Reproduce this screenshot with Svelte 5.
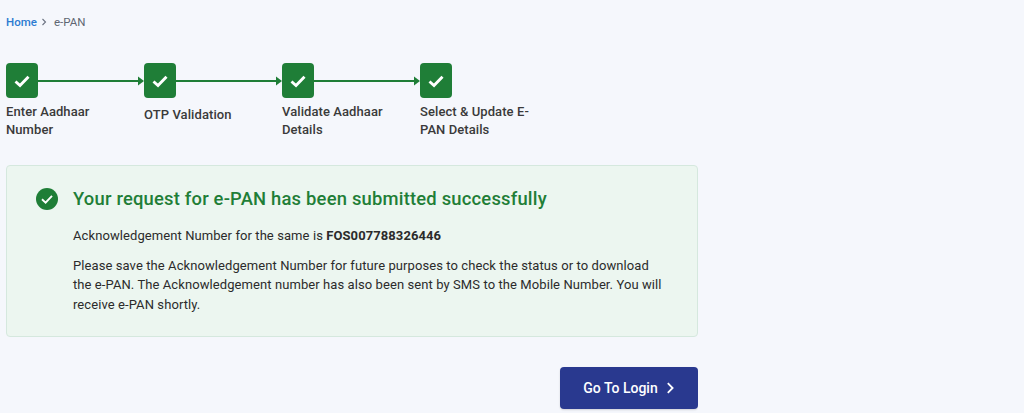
<script>
  const steps = [
    { label: 'Enter Aadhaar Number', arrow: true, cls: 'two' },
    { label: 'OTP Validation', arrow: true, cls: 'one' },
    { label: 'Validate Aadhaar Details', arrow: true, cls: 'two' },
    { label: 'Select & Update E-PAN Details', arrow: false, cls: 'two' }
  ];
</script>

<div class="page">
  <nav class="crumbs">
    <span class="home">Home</span>
    <svg class="sep" width="6" height="8" viewBox="0 0 6 8"><path d="M1.5 1 L4.5 4 L1.5 7" fill="none" stroke="#6b7280" stroke-width="1.1"/></svg>
    <span class="cur">e-PAN</span>
  </nav>

  <div class="stepper">
    {#each steps as s}
      <div class="step">
        <div class="track">
          <div class="box">
            <svg width="18" height="14" viewBox="0 0 18 14"><path d="M2.5 7.5 L7 11.5 L15.5 2.8" fill="none" stroke="#fff" stroke-width="2.9"/></svg>
          </div>
          {#if s.arrow}
            <svg class="arrow" width="106" height="10" viewBox="0 0 106 10"><path d="M0 5 H103" stroke="#1f7e37" stroke-width="2"/><path d="M100 0.5 L106 5 L100 9.5 Z" fill="#1f7e37"/></svg>
          {/if}
        </div>
        <div class="label {s.cls}">{s.label}</div>
      </div>
    {/each}
  </div>

  <section class="card">
    <div class="head">
      <svg width="22" height="22" viewBox="0 0 22 22"><circle cx="11" cy="11" r="11" fill="#1f7e37"/><path d="M6 11.3 L9.6 14.6 L16 7.8" fill="none" stroke="#fff" stroke-width="1.9"/></svg>
      <h2>Your request for e-PAN has been submitted successfully</h2>
    </div>
    <div class="body">
      <p class="ack">Acknowledgement Number for the same is <b>FOS007788326446</b></p>
      <p>Please save the Acknowledgement Number for future purposes to check the status or to download the e-PAN. The Acknowledgement number has also been sent by SMS to the Mobile Number. You will receive e-PAN shortly.</p>
    </div>
  </section>

  <div class="actions">
    <button>Go To Login
      <svg width="9" height="12" viewBox="0 0 9 12"><path d="M1.8 1.2 L6.6 6 L1.8 10.8" fill="none" stroke="#fff" stroke-width="1.8"/></svg>
    </button>
  </div>
</div>

<style>
  :global(body) { margin: 0; background: #f5f7fc; }
  .page { width: 692px; height: 398px; padding: 15px 0 0 6px; box-sizing: content-box; font-family: Roboto, "Liberation Sans", sans-serif; color: #2b2b2b; overflow: hidden; }
  .crumbs { display: flex; align-items: center; height: 14px; font-size: 11.5px; }
  .home { color: #2c7bd1; font-weight: 500; }
  .sep { margin: 0 7px 0 4px; }
  .cur { color: #5f6672; }
  .stepper { display: flex; margin-top: 34px; }
  .step { width: 138px; }
  .track { display: flex; align-items: center; }
  .box { width: 32px; height: 35px; flex: none; background: #1f7e37; border-radius: 4px; display: flex; align-items: center; justify-content: center; }
  .arrow { flex: none; }
  .label { width: 112px; font-size: 13px; font-weight: 500; line-height: 18px; color: #3a3a3a; letter-spacing: .08px; }
  .label.two { margin-top: 5px; }
  .label.one { margin-top: 8px; }
  .card { margin-top: 26px; width: 692px; height: 172px; box-sizing: border-box; border: 1px solid #d5e8de; border-radius: 4px; background: #ecf6f0; padding: 21px 30px 0 29px; }
  .head { display: flex; align-items: center; gap: 15px; }
  h2 { margin: 0; font-size: 18.4px; line-height: 24px; font-weight: 500; color: #1f7e37; letter-spacing: .2px; }
  .body { padding-left: 37px; font-size: 13px; line-height: 19.5px; color: #2b2b2b; letter-spacing: .085px; }
  p { margin: 0; }
  .ack { margin-top: 15px; margin-bottom: 10px; }
  b { font-weight: 700; }
  .actions { width: 692px; display: flex; justify-content: flex-end; margin-top: 30px; }
  button { width: 138px; height: 42px; border: 0; border-radius: 4px; background: #29398f; color: #fff; font: 500 14px Roboto, sans-serif; display: flex; align-items: center; justify-content: center; gap: 8px; box-shadow: 0 1px 2px rgba(0,0,0,.15); }
</style>
